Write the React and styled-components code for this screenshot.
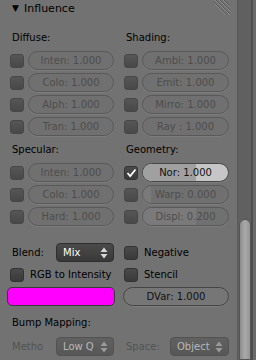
import React from "react";
import styled, { createGlobalStyle } from "styled-components";

const Global = createGlobalStyle`
  html, body {
    margin: 0;
    padding: 0;
    background: #727272;
    overflow: hidden;
  }
  * { box-sizing: border-box; }
`;

const Window = styled.div`
  display: flex;
  width: 256px;
  height: 360px;
  font-family: "DejaVu Sans", "Liberation Sans", sans-serif;
  font-size: 10px;
  color: #000;
  background: #727272;
  overflow: hidden;
`;

const Panel = styled.div`
  width: 237px;
  flex: none;
`;

const Header = styled.div`
  display: flex;
  align-items: center;
  height: 17px;
  padding-left: 12px;
  font-size: 11px;
`;

const Arrow = styled.span`
  font-size: 9px;
  width: 12px;
  margin-top: -1px;
`;

const Grip = styled.svg`
  margin-left: auto;
  margin-right: 7px;
  align-self: flex-start;
`;

const Body = styled.div`
  padding: 14px 0 0 10px;
`;

const Columns = styled.div`
  display: grid;
  grid-template-columns: 104px 105px;
  column-gap: 10px;
  row-gap: 3px;
  margin-top: ${(p) => p.$mt || 0}px;
`;

const Col = styled.div`
  display: flex;
  flex-direction: column;
  gap: 3px;
`;

const Label = styled.div`
  height: 14px;
  line-height: 14px;
  padding-left: ${(p) => (p.$pl ?? 2)}px;
  margin-bottom: ${(p) => p.$mb || 0}px;
  margin-top: ${(p) => p.$mt || 0}px;
  color: ${(p) => (p.$dim ? "#535353" : "#000")};
  white-space: nowrap;
`;

const Row = styled.div`
  display: flex;
  align-items: center;
  height: 19px;
  gap: ${(p) => p.$gap ?? 4}px;
`;

const Check = styled.div`
  width: 14px;
  height: 14px;
  flex: none;
  border-radius: 3px;
  border: 1px solid ${(p) => (p.$dim ? "#474747" : "#333")};
  background: ${(p) =>
    p.$dim
      ? "linear-gradient(#565656, #484848)"
      : "linear-gradient(#4a4a4a, #3a3a3a)"};
  display: flex;
  align-items: center;
  justify-content: center;
`;

const Slider = styled.div`
  position: relative;
  flex: 1;
  height: 19px;
  border-radius: 10px;
  overflow: hidden;
  border: 1px solid ${(p) => (p.$active ? "#454545" : "#595959")};
  background: ${(p) => p.$bg || "#707070"};
  box-shadow: 0 1px 0 rgba(255, 255, 255, 0.08);
  color: ${(p) => (p.$active ? "#111" : "#4d4d4d")};
  margin-left: ${(p) => p.$ml || 0}px;
  display: flex;
  align-items: center;
  justify-content: center;
  white-space: nowrap;
`;

const Fill = styled.div`
  position: absolute;
  left: 0;
  top: 0;
  bottom: 0;
  background: ${(p) => p.$color};
`;

const SliderText = styled.span`
  position: relative;
`;

const Menu = styled.div`
  display: flex;
  align-items: center;
  width: ${(p) => p.$w}px;
  height: 19px;
  margin-left: auto;
  padding: 0 5px 0 6px;
  border-radius: 4px;
  border: 1px solid ${(p) => (p.$dim ? "#525252" : "#2e2e2e")};
  background: ${(p) =>
    p.$dim
      ? "linear-gradient(#616161, #575757)"
      : "linear-gradient(#4a4a4a, #393939)"};
  color: ${(p) => (p.$dim ? "#b8b8b8" : "#fff")};
`;

const Updown = styled.svg`
  margin-left: auto;
`;

const Swatch = styled.div`
  height: 19px;
  margin-left: -3px;
  margin-right: -1px;
  border-radius: 5px;
  border: 1px solid #3a3a3a;
  background: #ff00ff;
`;

const ScrollArea = styled.div`
  display: flex;
  flex: 1;
`;

const Track = styled.div`
  width: 14px;
  border-left: 1px solid #5a5a5a;
  background: #606060;
  padding: 219px 0 0 1px;
`;

const Thumb = styled.div`
  width: 12px;
  height: 100%;
  border-radius: 6px 6px 0 0;
  border: 1px solid #555;
  background: linear-gradient(90deg, #8c8c8c, #aaaaaa 50%, #949494);
`;

const Edge = styled.div`
  flex: 1;
  border-left: 2px solid #4e4e4e;
  background: #6a6a6a;
`;

const Tick = () => (
  <svg width="11" height="10" viewBox="0 0 11 10">
    <path d="M1.5 5 L4.2 8 L9.5 1.5" fill="none" stroke="#fff" strokeWidth="1.8" />
  </svg>
);

const Arrows = ({ dim }) => (
  <Updown width="8" height="12" viewBox="0 0 8 12">
    <path d="M4 0.5 L7.5 5 H0.5 Z M4 11.5 L7.5 7 H0.5 Z" fill={dim ? "#9a9a9a" : "#d8d8d8"} />
  </Updown>
);

const Toggle = ({ text, checked, active, dim = true, fill, fillColor, bg }) => (
  <Row>
    <Check $dim={dim}>{checked && <Tick />}</Check>
    <Slider $active={active} $bg={bg}>
      {fill ? <Fill $color={fillColor} style={{ width: fill }} /> : null}
      <SliderText>{text}</SliderText>
    </Slider>
  </Row>
);

const diffuse = ["Inten: 1.000", "Colo: 1.000", "Alph: 1.000", "Tran: 1.000"];
const shading = ["Ambi: 1.000", "Emit: 1.000", "Mirro: 1.000", "Ray : 1.000"];
const specular = ["Inten: 1.000", "Colo: 1.000", "Hard: 1.000"];

export default function App() {
  return (
    <Window>
      <Global />
      <Panel>
        <Header>
          <Arrow>▼</Arrow>
          Influence
          <Grip width="16" height="15" viewBox="0 0 16 15">
            {[0, 4, 8, 12].map((x) => (
              <g key={x}>
                <line x1={x - 3} y1="0" x2={x + 12} y2="15" stroke="#8c8c8c" strokeWidth="1" />
                <line x1={x - 2} y1="0" x2={x + 13} y2="15" stroke="#585858" strokeWidth="1" />
              </g>
            ))}
          </Grip>
        </Header>
        <Body>
          <Columns>
            <Col>
              <Label $mb={3}>Diffuse:</Label>
              {diffuse.map((t) => (
                <Toggle key={t} text={t} />
              ))}
            </Col>
            <Col>
              <Label $mb={3}>Shading:</Label>
              {shading.map((t) => (
                <Toggle key={t} text={t} />
              ))}
            </Col>
          </Columns>

          <Columns $mt={7}>
            <Col>
              <Label $mb={3}>Specular:</Label>
              {specular.map((t) => (
                <Toggle key={t} text={t} />
              ))}
            </Col>
            <Col>
              <Label $mb={3}>Geometry:</Label>
              <Toggle
                text="Nor: 1.000"
                checked
                dim={false}
                active
                bg="#c6c6c6"
                fill="62%"
                fillColor="#a0a0a0"
              />
              <Toggle text="Warp: 0.000" fill="9%" fillColor="#7a7a7a" />
              <Toggle text="Displ: 0.200" fill="62%" fillColor="#7a7a7a" />
            </Col>
          </Columns>

          <Columns $mt={17}>
            <Row>
              <Label>Blend:</Label>
              <Menu $w={58}>
                Mix
                <Arrows />
              </Menu>
            </Row>
            <Row $gap={6}>
              <Check />
              Negative
            </Row>
            <Row $gap={6}>
              <Check />
              RGB to Intensity
            </Row>
            <Row $gap={6}>
              <Check />
              Stencil
            </Row>
            <Swatch />
            <Slider $active $bg="#767676" $ml={-1}>
              <SliderText>DVar: 1.000</SliderText>
            </Slider>
          </Columns>

          <Label $mt={10}>Bump Mapping:</Label>
          <Columns $mt={7}>
            <Row>
              <Label $dim>Metho</Label>
              <Menu $w={58} $dim>
                Low Q
                <Arrows dim />
              </Menu>
            </Row>
            <Row>
              <Label $dim>Space:</Label>
              <Menu $w={59} $dim>
                Object
                <Arrows dim />
              </Menu>
            </Row>
          </Columns>
        </Body>
      </Panel>
      <ScrollArea>
        <Track>
          <Thumb />
        </Track>
        <Edge />
      </ScrollArea>
    </Window>
  );
}
